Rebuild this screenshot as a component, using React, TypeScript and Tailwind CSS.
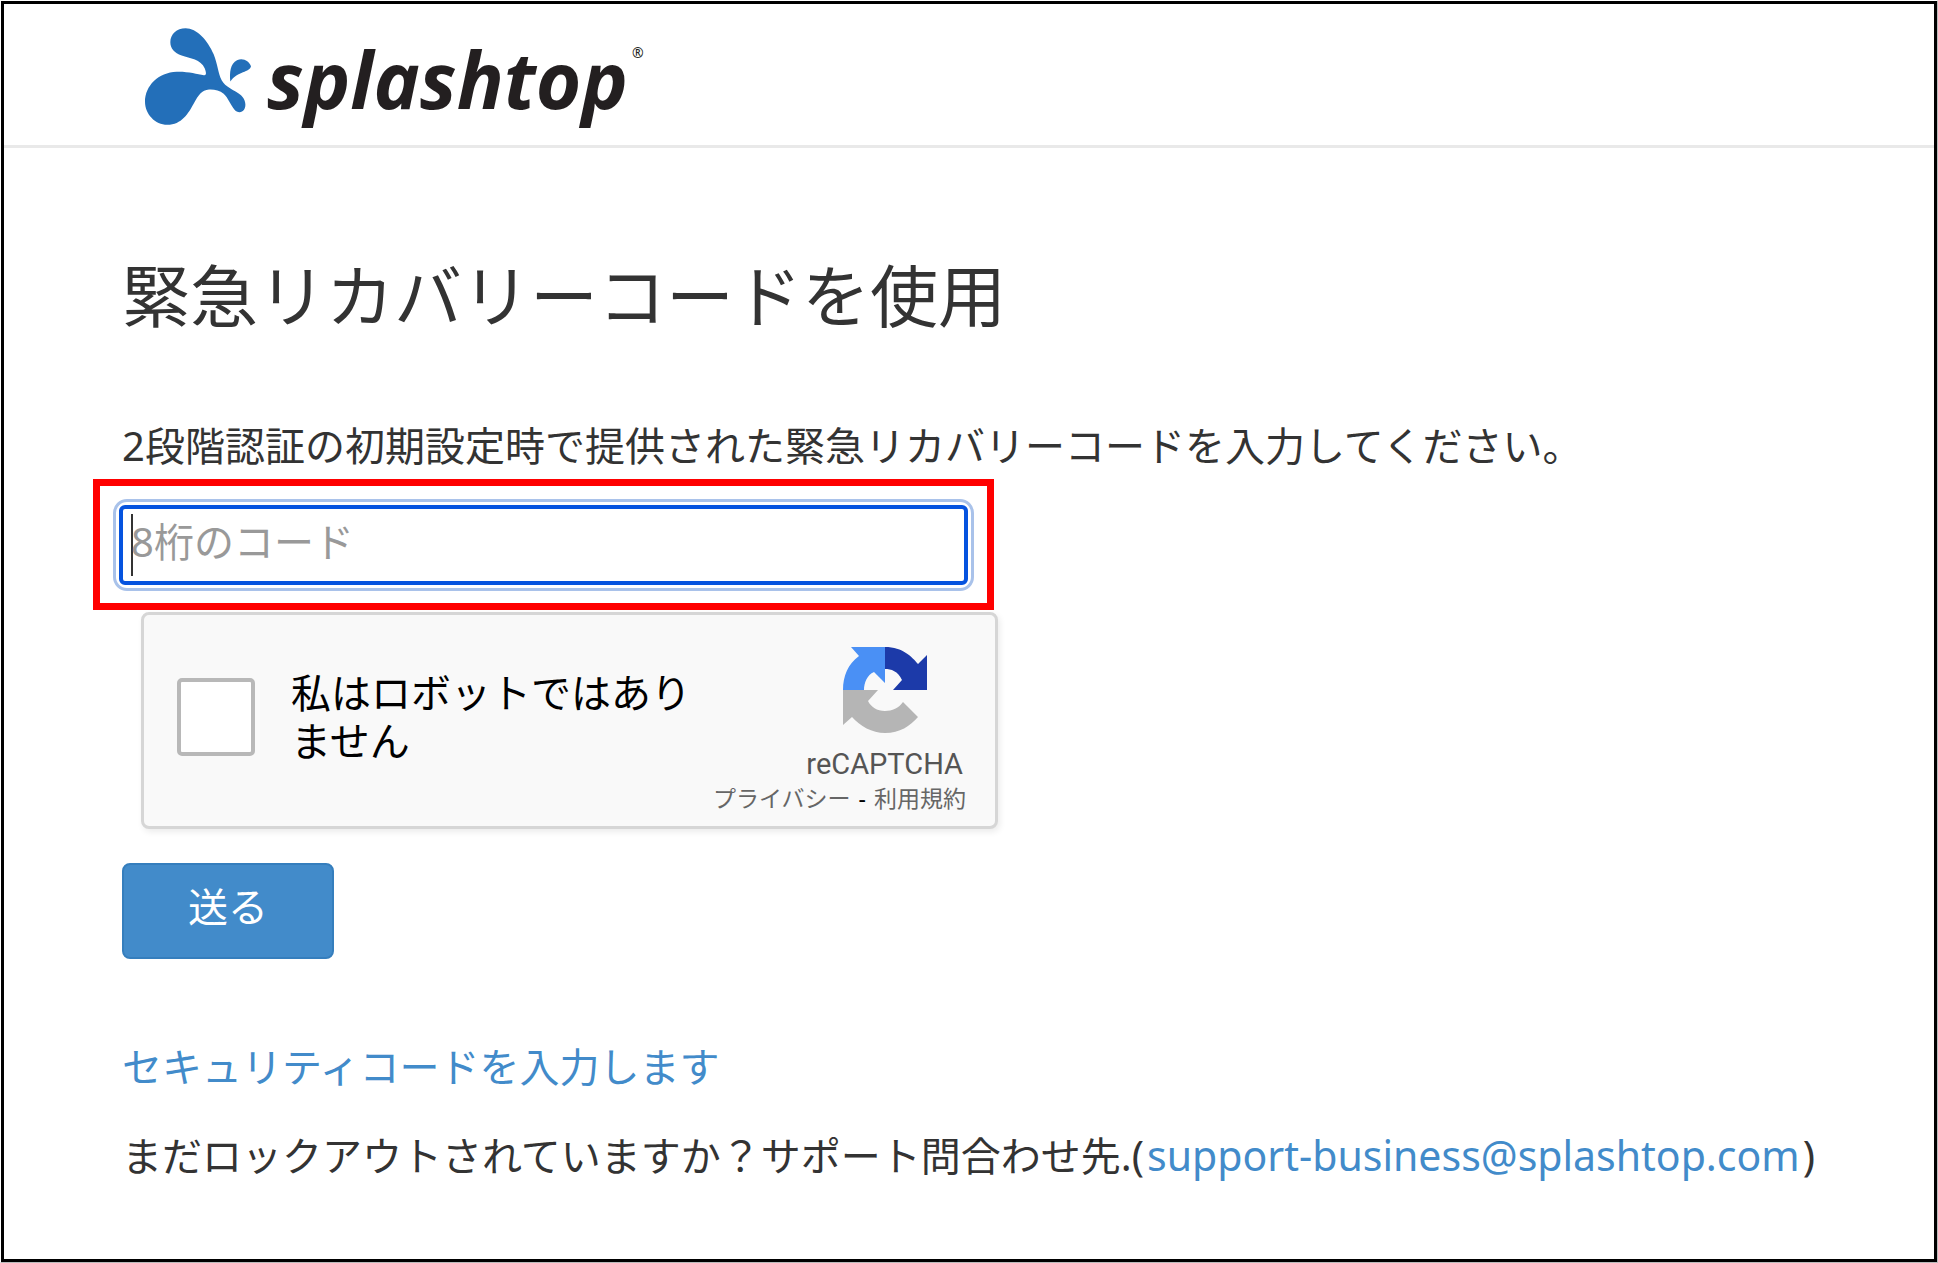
export default function App() {
  return (
    <div className="min-h-screen border-t border-r border-b border-l border-t-white border-r-[#bbb] border-b-[#bbb] border-l-white bg-white font-['Noto_Sans','Noto_Sans_CJK_JP',sans-serif] text-[40px] leading-[56px] text-[#333]">
      <div className="min-h-[1261px] border-[3px] border-black">
        <header className="flex h-[144px] items-center border-b-[3px] border-[#e9e9e9] pl-[141px]">
          <a href="#" aria-label="splashtop" className="flex items-center gap-4">
            <svg viewBox="30 22 318 290" className="mt-1 h-[97px] w-[106px]" fill="#236fb9">
              <path d="M152 22C185 22 218 58 236 100C248 130 250 160 260 178C270 198 298 207 318 223C332 236 335 255 327 267C320 277 306 276 298 266C286 252 280 232 266 219C254 208 236 205 222 206C200 208 190 224 178 245C160 278 140 312 97 312C60 312 30 280 30 243C30 195 70 155 125 153C160 152 185 160 207 163C216 164 213 152 209 142C198 116 165 112 140 104C118 96 106 82 106 64C106 40 125 22 152 22Z" />
              <path d="M286 182C283 155 286 128 306 118C326 110 342 122 348 136C345 155 308 150 286 182Z" />
            </svg>
            <span className="flex items-start pt-2 text-[#231f20]">
              <span className="font-['Open_Sans',sans-serif] text-[78px] leading-[88px] font-bold italic">splashtop</span>
              <span className="pt-2 pl-1 text-[14px] leading-[20px]">®</span>
            </span>
          </a>
        </header>
        <main className="pl-[118px]">
          <h1 className="pt-[100px] text-[68px] leading-[96px]">緊急リカバリーコードを使用</h1>
          <label htmlFor="code" className="mt-[74px] block">
            2段階認証の初期設定時で提供された緊急リカバリーコードを入力してください。
          </label>
          <div className="mt-[5px] -ml-[29px] w-[901px] border-[7px] border-[#f00] px-[13px] pt-[13px] pb-[12px]">
            <div className="rounded-[14px] border-[3px] border-[#a9c2ea] p-[3px]">
              <div className="flex items-center rounded-[6px] border-4 border-[#0553df] px-2">
                <span className="h-[62px] w-[2px] bg-[#333]" />
                <input
                  id="code"
                  type="text"
                  placeholder="8桁のコード"
                  className="-ml-[2px] h-[72px] min-w-0 flex-1 pb-2 outline-none placeholder:text-[#999]"
                />
              </div>
            </div>
          </div>
          <div className="mt-[2px] ml-[19px] flex h-[217px] w-[857px] justify-between rounded-[8px] border-[3px] border-[#d6d6d6] bg-[#f9f9f9] shadow-[2px_3px_6px_rgba(0,0,0,0.08)]">
            <label className="flex items-center gap-[36px] pb-[8px] pl-[33px] text-black">
              <input type="checkbox" className="size-[78px] appearance-none rounded-[5px] border-4 border-[#b8b8b8] bg-white" />
              <span className="w-[410px] leading-[48px]">私はロボットではありません</span>
            </label>
            <div className="flex flex-col items-end pt-[32px] pr-[29px]">
              <svg viewBox="0 0 86 86" className="mr-[38px] h-[86px] w-[86px]">
                <path d="M43 0C61 0 70 10 76 17L85 8V43H51L60 33C56 24 49 22 43 22Z" fill="#1c3aa9" />
                <path d="M43 0H9L17 9C6 17 1 29 1 43H22C22 36 25 28 32 25L43 36Z" fill="#4a90f5" />
                <path d="M1 43V78L10 70C18 79 30 86 43 86C58 86 68 79 76 70L61 55C57 61 50 64 43 64C35 64 29 60 26 54L36 43Z" fill="#b5b5b5" />
              </svg>
              <span className="mt-[13px] mr-[3px] font-[Roboto,sans-serif] text-[29px] leading-[36px] text-[#555]">reCAPTCHA</span>
              <span className="flex gap-2 text-[23px] leading-[32px] text-black">
                <a href="#" className="text-[#666]">プライバシー</a>-<a href="#" className="text-[#666]">利用規約</a>
              </span>
            </div>
          </div>
          <button type="button" className="mt-[34px] block h-[96px] rounded-[8px] border-2 border-[#357ebd] bg-[#428bca] px-[64px] pb-2 text-white">
            送る
          </button>
          <p className="mt-[80px]">
            <a href="#" className="text-[#428bca]">セキュリティコードを入力します</a>
          </p>
          <p className="mt-[32px]">
            まだロックアウトされていますか？サポート問合わせ先
            <span className="text-[41px]">
              .(
              <a href="mailto:support-business@splashtop.com" className="mx-[3px] text-[#428bca]">support-business@splashtop.com</a>)
            </span>
          </p>
        </main>
      </div>
    </div>
  );
}
